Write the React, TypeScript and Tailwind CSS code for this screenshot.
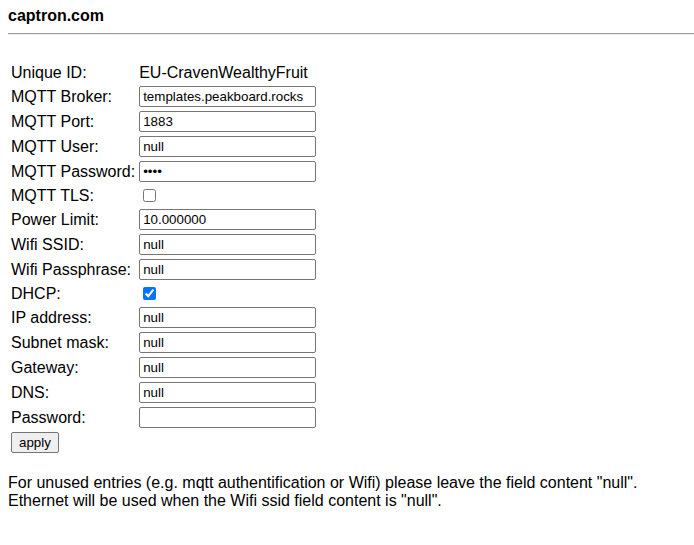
const rows: { label: string; kind: "text" | "input" | "password" | "check"; value?: string; checked?: boolean }[] = [
  { label: "Unique ID:", kind: "text", value: "EU-CravenWealthyFruit" },
  { label: "MQTT Broker:", kind: "input", value: "templates.peakboard.rocks" },
  { label: "MQTT Port:", kind: "input", value: "1883" },
  { label: "MQTT User:", kind: "input", value: "null" },
  { label: "MQTT Password:", kind: "password", value: "null" },
  { label: "MQTT TLS:", kind: "check", checked: false },
  { label: "Power Limit:", kind: "input", value: "10.000000" },
  { label: "Wifi SSID:", kind: "input", value: "null" },
  { label: "Wifi Passphrase:", kind: "input", value: "null" },
  { label: "DHCP:", kind: "check", checked: true },
  { label: "IP address:", kind: "input", value: "null" },
  { label: "Subnet mask:", kind: "input", value: "null" },
  { label: "Gateway:", kind: "input", value: "null" },
  { label: "DNS:", kind: "input", value: "null" },
  { label: "Password:", kind: "password", value: "" },
];

const inputCls =
  "block w-[177px] h-[21px] border border-[#767676] rounded-[2px] px-[3px] text-[13.33px] leading-[normal] bg-white text-black outline-none";

const App = () => {
  return (
    <div className="min-h-screen bg-white text-black font-['Liberation_Sans',Arial,sans-serif] text-[16px] leading-[normal] pl-2 pt-[7px]">
      <div className="font-bold">captron.com</div>
      <hr className="mt-2 border-t border-b border-t-[#9a9a9a] border-b-[#eeeeee]" />

      <form onSubmit={(e) => e.preventDefault()}>
        <table className="mt-[26px] border-separate border-spacing-[2px]">
          <tbody>
            {rows.map((r) => (
              <tr key={r.label}>
                <td className="p-[1px] align-middle whitespace-nowrap">{r.label}</td>
                <td className="p-[1px] align-middle">
                  {r.kind === "text" && r.value}
                  {r.kind === "input" && <input type="text" defaultValue={r.value} className={inputCls} />}
                  {r.kind === "password" && <input type="password" defaultValue={r.value} className={inputCls} />}
                  {r.kind === "check" && (
                    <input
                      type="checkbox"
                      defaultChecked={r.checked}
                      className="block w-[13px] h-[13px] m-[3px_3px_3px_4px]"
                    />
                  )}
                </td>
              </tr>
            ))}
            <tr>
              <td className="p-[1px]">
                <button
                  type="submit"
                  className="block h-[21px] px-[7px] border border-[#767676] rounded-[2px] bg-[#efefef] text-[13.33px] leading-[normal]"
                >
                  apply
                </button>
              </td>
              <td className="p-[1px]"></td>
            </tr>
          </tbody>
        </table>
      </form>

      <p className="mt-[18px] pr-2">
        For unused entries (e.g. mqtt authentification or Wifi) please leave the field content "null".
        <br />
        Ethernet will be used when the Wifi ssid field content is "null".
      </p>
    </div>
  );
};

export default App;
